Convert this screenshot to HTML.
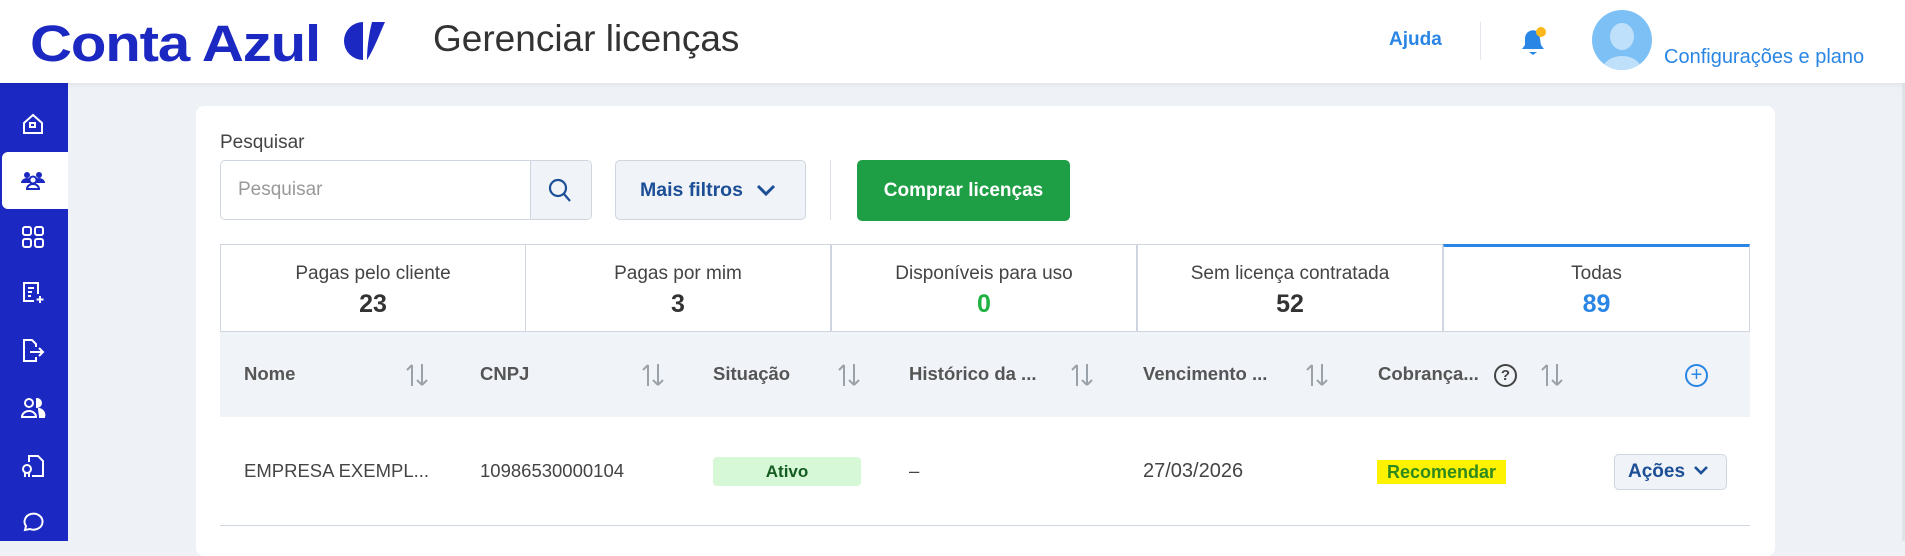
<!DOCTYPE html>
<html><head><meta charset="utf-8"><style>
*{box-sizing:border-box;margin:0;padding:0}
body{width:1905px;height:541px;overflow:hidden;background:#eef2f7;font-family:"Liberation Sans",sans-serif;position:relative;color:#333}
.hdr{position:absolute;left:0;top:0;width:1905px;height:83px;background:#fff;box-shadow:0 2px 6px rgba(0,0,0,.06);z-index:2}
.abs{position:absolute}
.side{position:absolute;left:0;top:83px;width:68px;height:458px;background:#1b28c1}
.ic{position:absolute;left:20px;width:26px;height:26px}
.card{position:absolute;left:196px;top:106px;width:1579px;height:450px;background:#fff;border-radius:8px}
.tab{position:absolute;top:244px;height:88px;width:306px;border:1px solid #cfd6df;text-align:center;background:#fff}
.tab .l{margin-top:18px;font-size:19px;color:#444}
.tab .n{margin-top:5px;font-size:25px;font-weight:bold;color:#333}
.th{position:absolute;top:363px;font-size:18.5px;font-weight:bold;color:#555}
.sort{position:absolute;top:362px}
.td{position:absolute;top:460px;font-size:18.5px;color:#444}
</style></head><body>
<div class="hdr">
 <div class="abs" style="left:30px;top:14px;font-size:51px;font-weight:bold;color:#1b28c1;letter-spacing:-1px;transform:scaleX(1.14);transform-origin:0 0">Conta Azul</div>
 <svg class="abs" style="left:344px;top:19px" width="44" height="44" viewBox="0 0 44 44"><path d="M19 3 A19 19 0 0 0 19 41 Z" fill="#1b28c1"/><path d="M23 41 C30 30 36 14 41 3 L28 3 C25 14 23 30 23 41Z" fill="#1b28c1"/></svg>
 <div class="abs" style="left:433px;top:18px;font-size:37px;color:#333">Gerenciar licenças</div>
 <div class="abs" style="left:1389px;top:29px;font-size:19px;font-weight:bold;color:#2a86e4">Ajuda</div>
 <div class="abs" style="left:1480px;top:22px;width:1px;height:38px;background:#e4e8ee"></div>
 <svg class="abs" style="left:1517px;top:24px" width="34" height="34" viewBox="0 0 34 34"><path d="M5 25 L8 21 V14 A8 8 0 0 1 22 9 L24 21 L27 25 Z" fill="#2a86e4"/><path d="M12 28 h8 l-4 3z" fill="#2a86e4"/><circle cx="24" cy="8" r="5" fill="#fbb81c"/></svg>
 <div class="abs" style="left:1592px;top:10px;width:60px;height:60px;border-radius:50%;background:#7cc0f5;overflow:hidden"><div class="abs" style="left:18px;top:13px;width:24px;height:27px;border-radius:50%;background:#bfe0fa"></div><div class="abs" style="left:10px;top:46px;width:40px;height:30px;border-radius:50%;background:#bfe0fa"></div></div>
 <div class="abs" style="left:1664px;top:46px;font-size:20px;color:#2a86e4">Configurações e plano</div>
</div>
<div class="side">
 <div class="abs" style="left:2px;top:69px;width:66px;height:57px;background:#fff;border-radius:6px 0 0 6px"></div>
 <svg class="ic" style="top:28px" viewBox="0 0 26 26" fill="none" stroke="#fff" stroke-width="2"><path d="M4 12 L13 4 L22 12 V22 H4 Z"/><rect x="10" y="12" width="5" height="4"/></svg>
 <svg class="ic" style="top:84px" viewBox="0 0 26 26" fill="#1b28c1"><circle cx="7" cy="8" r="3"/><circle cx="19" cy="8" r="3"/><path d="M1 16 a6 5 0 0 1 12 0z M13 16 a6 5 0 0 1 12 0z"/><circle cx="13" cy="13" r="3.5" fill="#fff" stroke="#1b28c1" stroke-width="2"/><path d="M7 22 a6 5 0 0 1 12 0z" fill="#fff" stroke="#1b28c1" stroke-width="2"/></svg>
 <svg class="ic" style="top:141px" viewBox="0 0 26 26" fill="none" stroke="#fff" stroke-width="2"><rect x="3" y="3" width="8" height="8" rx="2"/><rect x="15" y="3" width="8" height="8" rx="2"/><rect x="3" y="15" width="8" height="8" rx="2"/><rect x="15" y="15" width="8" height="8" rx="2"/></svg>
 <svg class="ic" style="top:197px" viewBox="0 0 26 26" fill="none" stroke="#fff" stroke-width="2"><path d="M18 14 V3 H4 V21 H14"/><path d="M8 8h6M8 12h4M8 16h3"/><path d="M20 16v7M16.5 19.5h7"/></svg>
 <svg class="ic" style="top:255px" viewBox="0 0 26 26" fill="none" stroke="#fff" stroke-width="2"><path d="M16 9 V6 L12 2 H4 V23 H16 V19"/><path d="M10 14h13M19 10l4 4-4 4"/></svg>
 <svg class="ic" style="top:312px" viewBox="0 0 26 26" fill="none" stroke="#fff" stroke-width="2"><circle cx="9" cy="8" r="4"/><path d="M2 22 a7 6 0 0 1 14 0z"/><path d="M17 4 a4 4 0 0 1 0 8z M18 14 a6 6 0 0 1 6 8 h-5" fill="#fff"/></svg>
 <svg class="ic" style="top:370px" viewBox="0 0 26 26" fill="none" stroke="#fff" stroke-width="2"><path d="M9 9 V3 H18 L23 8 V23 H12"/><circle cx="7" cy="16" r="4"/><path d="M5 20v4M9 20v4"/></svg>
 <svg class="ic" style="top:426px" viewBox="0 0 26 26" fill="none" stroke="#fff" stroke-width="2"><path d="M5 21 L6 17 A9 8 0 1 1 10 20 Z"/></svg>
</div>
<div class="abs" style="right:0;top:83px;width:3px;height:458px;background:#e0e4ea"></div>
<div class="card"></div>
<div class="abs" style="left:220px;top:132px;font-size:19px;color:#444">Pesquisar</div>
<div class="abs" style="left:220px;top:160px;width:372px;height:60px;border:1px solid #cfd6df;border-radius:5px;background:#fff"></div>
<div class="abs" style="left:238px;top:179px;font-size:19px;color:#999">Pesquisar</div>
<div class="abs" style="left:530px;top:161px;width:61px;height:58px;border-left:1px solid #cfd6df;background:#f0f3f8;border-radius:0 5px 5px 0"></div>
<svg class="abs" style="left:546px;top:177px" width="28" height="28" viewBox="0 0 28 28" fill="none" stroke="#1c4f95" stroke-width="2.2"><circle cx="12" cy="11" r="8"/><path d="M18 17 L24 24"/></svg>
<div class="abs" style="left:615px;top:160px;width:191px;height:60px;border:1px solid #cfd6df;border-radius:5px;background:#f0f3f8"></div>
<div class="abs" style="left:640px;top:179px;font-size:19.5px;font-weight:bold;color:#1c4f95">Mais filtros</div>
<svg class="abs" style="left:755px;top:182px" width="22" height="16" viewBox="0 0 22 16" fill="none" stroke="#1c4f95" stroke-width="3"><path d="M3 4 L11 12 L19 4"/></svg>
<div class="abs" style="left:830px;top:160px;width:1px;height:60px;background:#dde2e8"></div>
<div class="abs" style="left:857px;top:160px;width:213px;height:61px;background:#1e9e45;border-radius:5px;color:#fff;font-size:19px;font-weight:bold;text-align:center;line-height:61px">Comprar licenças</div>
<div class="tab" style="left:220px"><div class="l">Pagas pelo cliente</div><div class="n">23</div></div>
<div class="tab" style="left:525px"><div class="l">Pagas por mim</div><div class="n">3</div></div>
<div class="tab" style="left:831px"><div class="l">Disponíveis para uso</div><div class="n" style="color:#1fb141">0</div></div>
<div class="tab" style="left:1137px"><div class="l">Sem licença contratada</div><div class="n">52</div></div>
<div class="tab" style="left:1443px;width:307px;border-top:3px solid #2a86e4"><div class="l" style="margin-top:16px">Todas</div><div class="n" style="color:#2a86e4">89</div></div>
<div class="abs" style="left:220px;top:332px;width:1530px;height:85px;background:#f0f3f8"></div>
<svg width="0" height="0" style="position:absolute"><defs><g id="ar" fill="none" stroke="#9aa1a8" stroke-width="2"><path d="M7 24 V3 M2 8 L7 3"/><path d="M17 2 V23 M12 18 L17 23 M22 18 L17 23" /></g></defs></svg>
<div class="th" style="left:244px">Nome</div><svg class="sort" style="left:405px" width="25" height="26"><use href="#ar"/></svg>
<div class="th" style="left:480px">CNPJ</div><svg class="sort" style="left:641px" width="25" height="26"><use href="#ar"/></svg>
<div class="th" style="left:713px">Situação</div><svg class="sort" style="left:837px" width="25" height="26"><use href="#ar"/></svg>
<div class="th" style="left:909px">Histórico da ...</div><svg class="sort" style="left:1070px" width="25" height="26"><use href="#ar"/></svg>
<div class="th" style="left:1143px">Vencimento ...</div><svg class="sort" style="left:1305px" width="25" height="26"><use href="#ar"/></svg>
<div class="th" style="left:1378px">Cobrança...</div>
<div class="abs" style="left:1494px;top:364px;width:23px;height:23px;border:2px solid #444;border-radius:50%;font-size:15px;font-weight:bold;text-align:center;line-height:19px;color:#444">?</div>
<svg class="sort" style="left:1540px" width="25" height="26"><use href="#ar"/></svg>
<div class="abs" style="left:1685px;top:364px;width:23px;height:23px;border:2px solid #2a86e4;border-radius:50%;color:#2a86e4;font-size:20px;text-align:center;line-height:18px">+</div>
<div class="td" style="left:244px">EMPRESA EXEMPL...</div>
<div class="td" style="left:480px">10986530000104</div>
<div class="abs" style="left:713px;top:457px;width:148px;height:29px;background:#d6f8d6;border-radius:4px;text-align:center;line-height:29px;font-size:17px;font-weight:bold;color:#145c22">Ativo</div>
<div class="td" style="left:909px">–</div>
<div class="td" style="left:1143px;font-size:20px">27/03/2026</div>
<div class="abs" style="left:1377px;top:460px;width:129px;height:24px;background:#fff200;color:#2f8a1d;font-size:18px;font-weight:bold;text-align:center;line-height:24px">Recomendar</div>
<div class="abs" style="left:1614px;top:454px;width:113px;height:36px;border:1px solid #cfd6df;border-radius:5px;background:#f0f3f8"></div>
<div class="abs" style="left:1628px;top:461px;font-size:19px;font-weight:bold;color:#1c4f95">Ações</div>
<svg class="abs" style="left:1693px;top:464px" width="16" height="14" viewBox="0 0 16 14" fill="none" stroke="#1c4f95" stroke-width="2.6"><path d="M2 3 L8 9 L14 3"/></svg>
<div class="abs" style="left:220px;top:525px;width:1530px;height:1px;background:#cfd6df"></div>
</body></html>
